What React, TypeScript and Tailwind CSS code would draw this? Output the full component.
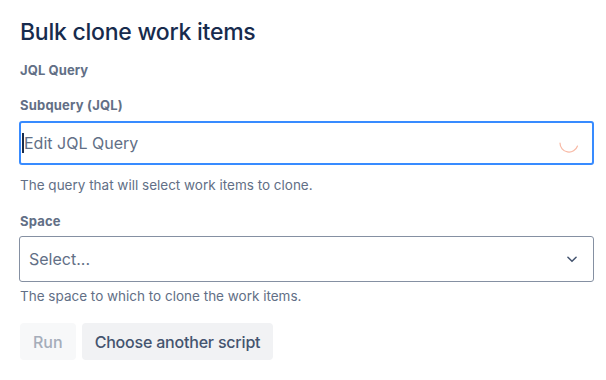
export default function App() {
  return (
    <div className="min-h-screen bg-white px-5 pt-[16px] text-[#172B4D]" style={{ fontFamily: 'Inter, "Noto Sans", sans-serif' }}>
      <h1 className="text-[23px] font-medium leading-[32px] tracking-[-0.25px]">Bulk clone work items</h1>

      <div className="mt-[14px] text-[13px] font-bold leading-[16px] tracking-[0.1px] text-[#626F86]">JQL Query</div>

      <label className="mt-[19px] block text-[13px] font-bold leading-[16px] tracking-[0.2px] text-[#626F86]">Subquery (JQL)</label>
      <div className="mt-[8px] -ml-px flex h-[44px] w-[575px] items-center rounded-[3px] border-2 border-[#388BFF] pl-[1px] pr-[11px]">
        <div className="h-[20px] w-[2px] bg-[#172B4D]" />
        <span className="flex-1 text-[16px] text-[#626F86]">Edit JQL Query</span>
        <svg width="24" height="24" viewBox="0 0 24 24" fill="none">
          <path d="M3 12a9 9 0 0 0 17.5 3" stroke="#F8B9A5" strokeWidth="1.2" strokeLinecap="round" />
        </svg>
      </div>
      <p className="mt-[12px] text-[13.5px] leading-[16px] text-[#626F86]">The query that will select work items to clone.</p>

      <label className="mt-[20px] block text-[13px] font-bold leading-[16px] tracking-[0.2px] text-[#626F86]">Space</label>
      <div className="mt-[7px] -ml-px flex h-[46px] w-[575px] items-center rounded-[3px] border border-[#8590A2] pl-[9px] pr-[14px]">
        <span className="flex-1 text-[16px] text-[#626F86]">Select...</span>
        <svg width="14" height="14" viewBox="0 0 24 24" fill="none">
          <path d="M5 9l7 7 7-7" stroke="#44546F" strokeWidth="2.6" strokeLinecap="round" strokeLinejoin="round" />
        </svg>
      </div>
      <p className="mt-[6px] text-[13.5px] leading-[16px] text-[#626F86]">The space to which to clone the work items.</p>

      <div className="mt-[19px] flex gap-[6px]">
        <button className="h-[37px] rounded-[4px] bg-[#F7F8F9] px-[13px] text-[16px] font-medium text-[#A5ADBA]">Run</button>
        <button className="h-[37px] rounded-[4px] bg-[#F1F2F4] px-[13px] text-[16px] font-medium tracking-[-0.2px] text-[#44546F]">Choose another script</button>
      </div>
    </div>
  );
}
